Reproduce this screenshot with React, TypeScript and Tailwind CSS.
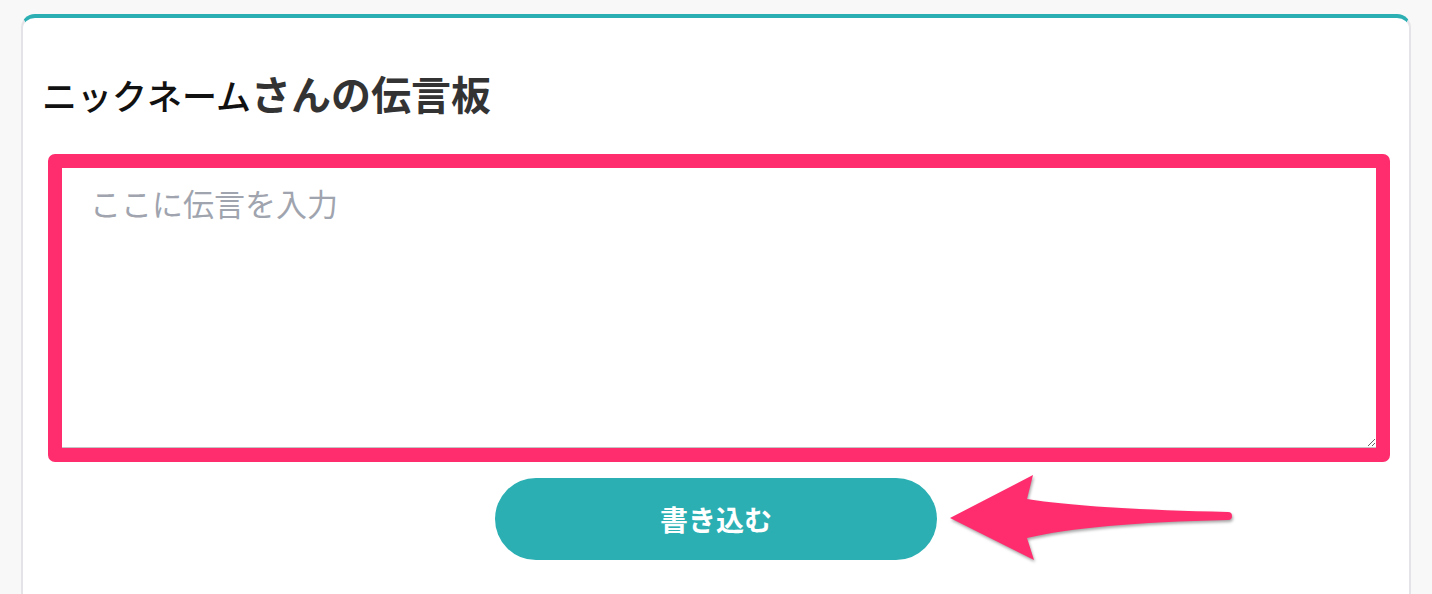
import React from 'react';

const jp = { fontFamily: '"Noto Sans CJK JP", "Noto Sans", sans-serif' };

function PointerArrow() {
  return (
    <svg
      className="absolute left-[898px] top-[-13px] w-[300px] h-[105px] overflow-visible"
      viewBox="0 0 300 105"
      style={{ filter: 'drop-shadow(1px 2px 1.5px rgba(0,0,0,0.35))' }}
    >
      <path
        d="M10 53 L93 10 L87 34 Q150 44 288 47 A4 4 0 0 1 288 55 Q150 58 87 73 L94 95 Z"
        fill="#ff2d6e"
        strokeLinejoin="round"
      />
    </svg>
  );
}

export default function App() {
  return (
    <div className="h-[594px] overflow-hidden bg-[#f8f8f8] pt-[14px] px-[21px]" style={jp}>
      <div className="bg-white border-t-4 border-t-[#2bafb3] border-x-2 border-x-[#e4e4e8] rounded-t-[14px] h-[620px] px-[19px] pt-[51px]">
        {/* Title */}
        <h1 className="flex items-baseline leading-[48px] whitespace-nowrap">
          <span className="text-[35px] font-medium text-[#111]">ニックネーム</span>
          <span className="text-[40px] font-bold text-[#333]">さんの伝言板</span>
        </h1>

        {/* Message box (highlighted) */}
        <div className="mt-[35px] ml-[6px] border-[14px] border-[#ff2d6e] rounded-[7px]">
          <textarea
            className="block w-full h-[280px] px-[28px] pt-[12px] text-[31px] leading-[1.5] text-[#333] placeholder:text-[#9fa4ae] border-b border-[#c4c4c4] outline-none bg-white"
            placeholder="ここに伝言を入力"
            style={jp}
          />
        </div>

        {/* Submit */}
        <div className="relative flex justify-center mt-[16px]">
          <button
            className="w-[442px] h-[82px] rounded-full bg-[#2bafb3] text-white text-[28px] font-bold"
            style={jp}
          >
            書き込む
          </button>
          <PointerArrow />
        </div>
      </div>
    </div>
  );
}
